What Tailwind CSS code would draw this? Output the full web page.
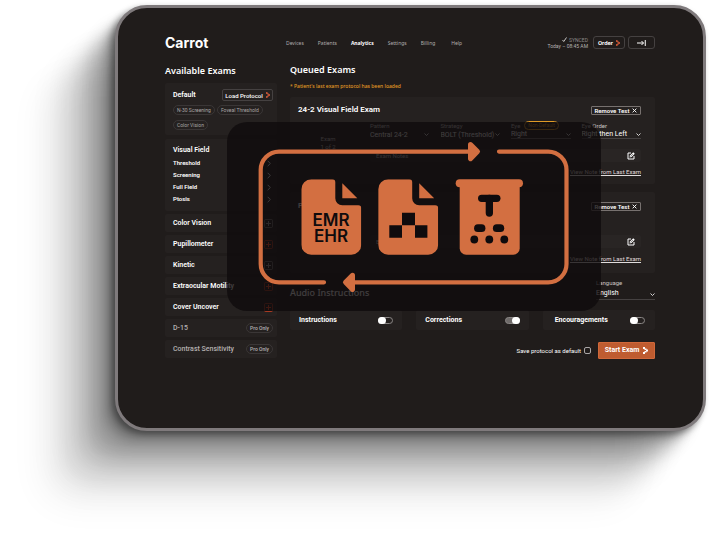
<!DOCTYPE html>
<html lang="en">
<head>
    <meta charset="UTF-8">
    <meta name="viewport" content="width=device-width, initial-scale=1.0">
    <title>Carrot - Queued Exams</title>
    <script src="https://cdn.jsdelivr.net/npm/@tailwindcss/browser@4"></script>
</head>
<body class="bg-white min-h-screen overflow-hidden pl-[115px] pr-[6px] pt-[5px] font-['Roboto',sans-serif] text-white">
    <!-- Shared icons -->
    <svg class="hidden" xmlns="http://www.w3.org/2000/svg">
        <symbol id="carrot" viewBox="0 0 10 14">
            <path d="M0 0h4v4H0zM3 3h4v3H3zM6 5h4v4H6zM3 8h4v3H3zM0 10h4v4H0z" />
        </symbol>
        <symbol id="chevronDown" viewBox="0 0 10 6">
            <path d="M1 1l4 4 4-4" fill="none" stroke="currentColor" stroke-width="1.6" />
        </symbol>
        <symbol id="chevronRight" viewBox="0 0 6 10">
            <path d="M1 1l4 4-4 4" fill="none" stroke="currentColor" stroke-width="1.4" />
        </symbol>
        <symbol id="plus" viewBox="0 0 9 9">
            <rect x=".5" y=".5" width="8" height="8" rx="1" fill="none" stroke="currentColor" stroke-opacity=".6" />
            <path d="M4.500 2v5M2 4.500h5" stroke="currentColor" />
        </symbol>
        <symbol id="close" viewBox="0 0 8 8">
            <path d="M1 1l6 6M7 1L1 7" stroke="currentColor" stroke-width="1.500" />
        </symbol>
        <symbol id="edit" viewBox="0 0 16 16">
            <path d="M8 2H2v12h12V8" fill="none" stroke="currentColor" stroke-width="2" />
            <path d="M5 11l1-4 6.500-6.500 3 3L9 10z" fill="currentColor" />
            <path d="M7 9l5-5" stroke="#282424" stroke-width="1" />
        </symbol>
        <symbol id="document" viewBox="0 0 60 76">
            <path d="M10 0H31a3 3 0 0 1 3 3V19a7 7 0 0 0 7 7H57a3 3 0 0 1 3 3V65.400a10 10 0 0 1-10 10H10a10 10 0 0 1-10-10V10A10 10 0 0 1 10 0zM41 4L56 19H41z" />
        </symbol>
    </svg>

    <div class="relative rounded-[32px] border-[3px] border-[#7f7a7c] bg-[#201c1b] pl-[47px] pr-[48px] pt-[28px] pb-[69px] shadow-[-3px_3px_6px_rgba(0,0,0,0.4),-9px_9px_10px_rgba(0,0,0,0.2),-18px_18px_16px_rgba(0,0,0,0.15),-30px_30px_18px_rgba(0,0,0,0.14),-44px_44px_24px_rgba(0,0,0,0.11),-58px_58px_28px_rgba(0,0,0,0.08),-74px_74px_34px_rgba(0,0,0,0.05)]">
        <header class="flex items-center h-[13px]">
            <h1 class="w-[121px] font-['Inter',sans-serif] text-[14px] leading-[13px] font-bold">Carrot</h1>
            <nav class="flex gap-[14px] font-['Noto_Sans',sans-serif] text-[5px] leading-[8px] text-[#b0acac]">
                <a href="#">Devices</a>
                <a href="#">Patients</a>
                <a href="#" class="font-bold text-white">Analytics</a>
                <a href="#">Settings</a>
                <a href="#">Billing</a>
                <a href="#" class="pl-[2px]">Help</a>
            </nav>
            <div class="ml-auto text-right text-[5px] leading-[6px] text-[#b5b1b1]">
                <p class="flex items-center justify-end gap-[2px] text-[#8d8989]">
                    <svg class="w-[5px] h-[5px]" viewBox="0 0 10 10"><path d="M1 6l2.500 3L9 1" fill="none" stroke="#fff" stroke-width="1.500" /></svg>
                    SYNCED
                </p>
                <p>Today – 08:45 AM</p>
            </div>
            <button type="button" class="ml-[5px] w-[32px] h-[13px] rounded-[3px] border border-[#454141] flex items-center justify-center gap-[3px] text-[6px] font-semibold">
                Order
                <svg class="w-[4px] h-[6px] fill-[#e8603a]"><use href="#carrot" /></svg>
            </button>
            <button type="button" aria-label="Exit" class="ml-[3px] w-[27px] h-[13px] rounded-[3px] border border-[#454141] flex items-center justify-center">
                <svg class="w-[9px] h-[6px]" viewBox="0 0 18 12"><path d="M0 6h13M9 2l4 4-4 4M16.500 0v12" fill="none" stroke="#fff" stroke-width="2" /></svg>
            </button>
        </header>

        <div class="mt-[15px] grid grid-cols-[112px_1fr] gap-[13px]">
            <!-- Available exams -->
            <aside>
                <h2 class="font-['Noto_Sans',sans-serif] text-[9px] leading-[14px] font-semibold">Available Exams</h2>
                <section class="mt-[5px] h-[52px] rounded-[2px] bg-[#252120] pl-[8px] pr-[4px] pt-[6px]">
                    <div class="flex items-center justify-between">
                        <h3 class="text-[7px] leading-[12px] font-semibold">Default</h3>
                        <button type="button" class="w-[51px] h-[12px] rounded-[2px] border border-[#454141] flex items-center justify-center gap-[3px] text-[6px] font-medium whitespace-nowrap">
                            Load Protocol
                            <svg class="w-[4px] h-[6px] fill-[#e8603a]"><use href="#carrot" /></svg>
                        </button>
                    </div>
                    <div class="mt-[4px] flex flex-wrap gap-x-[2px] gap-y-[5px] text-[5px] leading-[8px] text-[#aaa6a6] whitespace-nowrap">
                        <span class="rounded-full border border-[#3a3636] px-[3px]">N-30 Screening</span>
                        <span class="rounded-full border border-[#3a3636] px-[3px]">Foveal Threshold</span>
                        <span class="rounded-full border border-[#3a3636] px-[3px]">Color Vision</span>
                    </div>
                </section>

                <section class="mt-[4px] h-[72px] rounded-[2px] bg-[#252120] pl-[8px] pr-[6px] pt-[5px]">
                    <h3 class="text-[7px] leading-[12px] font-semibold">Visual Field</h3>
                    <ul class="mt-[1px] text-[6px] leading-[12px] font-semibold">
                        <li><button type="button" class="w-full flex items-center justify-between">Threshold <svg class="w-[4px] h-[7px]"><use href="#chevronRight" /></svg></button></li>
                        <li><button type="button" class="w-full flex items-center justify-between">Screening <svg class="w-[4px] h-[7px]"><use href="#chevronRight" /></svg></button></li>
                        <li><button type="button" class="w-full flex items-center justify-between">Full Field <svg class="w-[4px] h-[7px]"><use href="#chevronRight" /></svg></button></li>
                        <li><button type="button" class="w-full flex items-center justify-between">Ptosis <svg class="w-[4px] h-[7px]"><use href="#chevronRight" /></svg></button></li>
                    </ul>
                </section>

                <div class="mt-[3px] flex flex-col gap-[3px] text-[7px] leading-[12px] font-semibold whitespace-nowrap">
                    <button type="button" class="h-[18px] rounded-[2px] bg-[#252120] pl-[8px] pr-[4px] flex items-center justify-between">Color Vision <svg class="w-[9px] h-[9px] text-[#a09c9c]"><use href="#plus" /></svg></button>
                    <button type="button" class="h-[18px] rounded-[2px] bg-[#252120] pl-[8px] pr-[4px] flex items-center justify-between">Pupillometer <svg class="w-[9px] h-[9px] text-[#ff4b25]"><use href="#plus" /></svg></button>
                    <button type="button" class="h-[18px] rounded-[2px] bg-[#252120] pl-[8px] pr-[4px] flex items-center justify-between">Kinetic <svg class="w-[9px] h-[9px] text-[#a09c9c]"><use href="#plus" /></svg></button>
                    <button type="button" class="h-[18px] rounded-[2px] bg-[#252120] pl-[8px] pr-[4px] flex items-center justify-between">Extraocular Motility <svg class="w-[9px] h-[9px] text-[#ff4b25]"><use href="#plus" /></svg></button>
                    <button type="button" class="h-[18px] rounded-[2px] bg-[#252120] pl-[8px] pr-[4px] flex items-center justify-between">Cover Uncover <svg class="w-[9px] h-[9px] text-[#ff4b25]"><use href="#plus" /></svg></button>
                    <div class="h-[18px] rounded-[2px] bg-[#252120] pl-[8px] pr-[4px] flex items-center justify-between font-medium text-[#b5b1b1]">D-15 <span class="rounded-full border border-[#3a3636] px-[3px] text-[5px] leading-[8px]">Pro Only</span></div>
                    <div class="h-[18px] rounded-[2px] bg-[#252120] pl-[8px] pr-[4px] flex items-center justify-between font-medium text-[#b5b1b1]">Contrast Sensitivity <span class="rounded-full border border-[#3a3636] px-[3px] text-[5px] leading-[8px]">Pro Only</span></div>
                </div>
            </aside>

            <!-- Queued exams -->
            <main>
                <h2 class="font-['Noto_Sans',sans-serif] text-[9px] leading-[12px] font-semibold">Queued Exams</h2>
                <p class="mt-[6px] font-['Noto_Sans',sans-serif] text-[5px] leading-[8px] font-medium text-[#e09a25]">* Patient's last exam protocol has been loaded</p>

                <section class="mt-[7px] rounded-[2px] bg-[#252120] pl-[8px] pr-[14px] pt-[7px] pb-[8px]">
                    <div class="flex items-center justify-between">
                        <h3 class="text-[8px] leading-[12px] font-semibold">24-2 Visual Field Exam</h3>
                        <button type="button" class="w-[50px] h-[9px] rounded-[1px] border border-[#77716f] flex items-center justify-center gap-[3px] text-[6px] font-semibold whitespace-nowrap">
                            Remove Test
                            <svg class="w-[5px] h-[5px]"><use href="#close" /></svg>
                        </button>
                    </div>
                    <div class="mt-[5px] grid grid-cols-[72px_1fr]">
                        <div class="w-[60px] pt-[14px] text-center text-[6px] leading-[8px] text-[#c8c4c4]">
                            <p>Exam</p>
                            <p>1 of 2</p>
                        </div>
                        <div>
                            <div class="grid grid-cols-4 gap-[11px] text-[7px]">
                                <div>
                                    <label for="pattern" class="flex items-center h-[9px] text-[6px] text-[#c8c4c4]">Pattern</label>
                                    <div class="relative">
                                        <select id="pattern" class="block w-full h-[9px] appearance-none leading-[8px]"><option>Central 24-2</option></select>
                                        <svg class="absolute right-[1px] top-[3px] w-[5px] h-[3px]"><use href="#chevronDown" /></svg>
                                    </div>
                                </div>
                                <div>
                                    <label for="strategy" class="flex items-center h-[9px] text-[6px] text-[#c8c4c4]">Strategy</label>
                                    <div class="relative">
                                        <select id="strategy" class="block w-full h-[9px] appearance-none leading-[8px]"><option>BOLT (Threshold)</option></select>
                                        <svg class="absolute right-0 top-[3px] w-[5px] h-[3px]"><use href="#chevronDown" /></svg>
                                    </div>
                                </div>
                                <div>
                                    <div class="flex items-center h-[9px] gap-[4px]">
                                        <label for="eye" class="text-[6px] text-[#c8c4c4]">Eye</label>
                                        <span class="rounded-full border border-[#e09a25] px-[3px] text-[5px] leading-[7px] text-[#e09a25] whitespace-nowrap">Non-Default</span>
                                    </div>
                                    <div class="relative">
                                        <select id="eye" class="block w-full h-[9px] appearance-none border-b border-[#6b6666] leading-[8px]"><option>Right</option></select>
                                        <svg class="absolute right-0 top-[3px] w-[5px] h-[3px]"><use href="#chevronDown" /></svg>
                                    </div>
                                </div>
                                <div>
                                    <label for="eyeOrder" class="flex items-center h-[9px] text-[6px] text-[#c8c4c4]">Eye Order</label>
                                    <div class="relative">
                                        <select id="eyeOrder" class="block w-full h-[9px] appearance-none border-b border-[#454141] leading-[8px]"><option>Right then Left</option></select>
                                        <svg class="absolute right-0 top-[3px] w-[5px] h-[3px]"><use href="#chevronDown" /></svg>
                                    </div>
                                </div>
                            </div>
                            <div class="mt-[10px] h-[13px] rounded-[2px] bg-[#292524] px-[6px] flex items-center">
                                <input type="text" aria-label="Exam Notes" placeholder="Exam Notes" class="min-w-0 flex-1 h-[10px] text-[6px] placeholder:text-[#c8c4c4]">
                                <button type="button" aria-label="Edit notes"><svg class="w-[8px] h-[8px]"><use href="#edit" /></svg></button>
                            </div>
                            <p class="mt-[6px] text-right text-[6px] leading-[8px]"><a href="#" class="underline text-[#e0dcdc]">View Note from Last Exam</a></p>
                        </div>
                    </div>
                </section>

                <section class="mt-[8px] rounded-[2px] bg-[#252120] pl-[8px] pr-[14px] pt-[8px] pb-[10px]">
                    <div class="flex items-center justify-between">
                        <h3 class="text-[8px] leading-[12px] font-semibold">Ptosis</h3>
                        <button type="button" class="w-[50px] h-[9px] rounded-[1px] border border-[#77716f] flex items-center justify-center gap-[3px] text-[6px] font-semibold whitespace-nowrap">
                            Remove Test
                            <svg class="w-[5px] h-[5px]"><use href="#close" /></svg>
                        </button>
                    </div>
                    <div class="mt-[23px] ml-[72px] h-[13px] rounded-[2px] bg-[#292524] px-[6px] flex items-center">
                        <input type="text" aria-label="Exam Notes" placeholder="Exam Notes" class="min-w-0 flex-1 h-[10px] text-[6px] placeholder:text-[#c8c4c4]">
                        <button type="button" aria-label="Edit notes"><svg class="w-[8px] h-[8px]"><use href="#edit" /></svg></button>
                    </div>
                    <p class="mt-[7px] text-right text-[6px] leading-[8px]"><a href="#" class="underline text-[#e0dcdc]">View Note from Last Exam</a></p>
                </section>

                <!-- Audio instructions -->
                <div class="mt-[6px] flex items-end justify-between">
                    <h2 class="font-['Noto_Sans',sans-serif] text-[9px] leading-[14px] font-medium">Audio Instructions</h2>
                    <div class="w-[59px]">
                        <label for="language" class="block text-[6px] leading-[8px] text-[#c8c4c4]">Language</label>
                        <div class="relative">
                            <select id="language" class="block w-full h-[13px] appearance-none border-b border-[#454141] text-[7px]"><option>English</option></select>
                            <svg class="absolute right-0 top-[6px] w-[5px] h-[3px]"><use href="#chevronDown" /></svg>
                        </div>
                    </div>
                </div>
                <div class="mt-[10px] grid grid-cols-3 gap-[14px] text-[7px] leading-[10px] font-bold">
                    <div class="h-[20px] rounded-[2px] bg-[#252120] px-[9px] flex items-center justify-between">
                        <label for="instructions">Instructions</label>
                        <input type="checkbox" id="instructions" class="appearance-none w-[15px] h-[7px] rounded-full border border-[#8a8685] flex items-center before:w-[8px] before:h-[7px] before:-ml-px before:rounded-full before:bg-white">
                    </div>
                    <div class="h-[20px] rounded-[2px] bg-[#252120] px-[9px] flex items-center justify-between">
                        <label for="corrections">Corrections</label>
                        <input type="checkbox" id="corrections" checked class="appearance-none w-[15px] h-[7px] rounded-full border border-[#8a8685] bg-[#6f6b6a] flex items-center justify-end before:w-[8px] before:h-[7px] before:-mr-px before:rounded-full before:bg-white">
                    </div>
                    <div class="h-[20px] rounded-[2px] bg-[#252120] pl-[12px] pr-[10px] flex items-center justify-between">
                        <label for="encouragements">Encouragements</label>
                        <input type="checkbox" id="encouragements" class="appearance-none w-[15px] h-[7px] rounded-full border border-[#8a8685] flex items-center before:w-[8px] before:h-[7px] before:-ml-px before:rounded-full before:bg-white">
                    </div>
                </div>

                <div class="mt-[12px] flex items-center justify-end">
                    <label for="saveDefault" class="text-[6px] leading-[8px]">Save protocol as default</label>
                    <input type="checkbox" id="saveDefault" class="ml-[3px] appearance-none w-[7px] h-[7px] rounded-[2px] border border-[#aaa6a6]">
                    <button type="button" class="ml-[7px] w-[57px] h-[17px] rounded-[1px] border border-[#d0683a] bg-[#bf5c30] flex items-center justify-center gap-[4px] text-[7px] font-bold whitespace-nowrap">
                        Start Exam
                        <svg class="w-[5px] h-[7px] fill-white"><use href="#carrot" /></svg>
                    </button>
                </div>
            </main>
        </div>

        <!-- Data flow overlay -->
        <div class="absolute left-[109px] right-[102px] top-[114px] rounded-[20px] bg-[#0f0b0d]/80">
            <svg class="block w-full" viewBox="0 0 374 189" fill="#d36f41">
                <g fill="none" stroke="#d36f41" stroke-width="4.200" stroke-linecap="round">
                    <path d="M97 160.300H52a18.300 18.300 0 0 1-18.300-18.300V48a18.300 18.300 0 0 1 18.300-18.400H242" />
                    <path d="M272 29.600h49.200a18.300 18.300 0 0 1 18.300 18.400v94a18.300 18.300 0 0 1-18.300 18.300H127" />
                </g>
                <g stroke="#d36f41" stroke-width="5" stroke-linejoin="round">
                    <path d="M243.500 22.500l7 7.100-7 7.100z" />
                    <path d="M125.500 153.200l-7 7.100 7 7.100z" />
                </g>
                <!-- EMR / EHR -->
                <use href="#document" x="74.300" y="57.300" width="60" height="76" />
                <g fill="#0f0b0d" font-family="Inter, sans-serif" font-size="17" font-weight="600" text-anchor="middle">
                    <text x="104" y="104">EMR</text>
                    <text x="104" y="120">EHR</text>
                </g>
                <!-- Visual field file -->
                <use href="#document" x="151.200" y="57.300" width="60" height="76" />
                <path fill="#0f0b0d" d="M175 90.700h13v12.500h-13zM162.300 103.200H175v12.500h-12.700zM188 103.200h12.400v12.500H188z" />
                <!-- Shredder -->
                <g transform="translate(228.700 57.300)">
                    <rect width="67.300" height="8" rx="4" />
                    <path d="M4 4h60v65a6.400 6.400 0 0 1-6.400 6.400H10.400A6.400 6.400 0 0 1 4 69z" />
                    <g fill="#0f0b0d">
                        <rect x="22.300" y="15.400" width="22.500" height="7.300" rx="3.650" />
                        <rect x="30" y="15.400" width="7.300" height="22" rx="3.650" />
                        <rect x="18.400" y="45" width="11.300" height="7.700" rx="3.850" />
                        <rect x="37.200" y="45" width="11.300" height="7.700" rx="3.850" />
                        <circle cx="18.600" cy="60.200" r="3.900" />
                        <circle cx="33.600" cy="60.200" r="3.900" />
                        <circle cx="48.600" cy="60.200" r="3.900" />
                    </g>
                </g>
            </svg>
        </div>
    </div>
</body>
</html>
